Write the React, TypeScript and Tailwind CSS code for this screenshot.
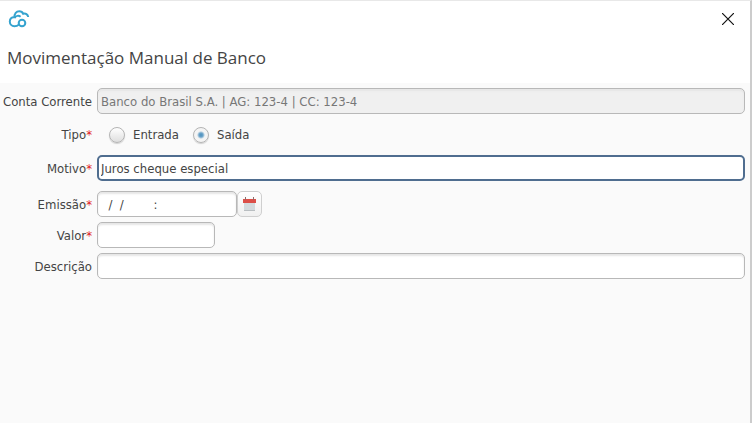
import { useState } from 'react';
import type { ReactNode } from 'react';

const fieldBase =
  'h-[26px] rounded-[5px] border border-[#b8b8b8] px-[3px] shadow-[inset_0_2px_2px_#e6e6e6] outline-none';

function Label({ htmlFor, required, children }: { htmlFor: string; required?: boolean; children: ReactNode }) {
  return (
    <label htmlFor={htmlFor} className="text-right leading-[17px] whitespace-nowrap">
      {children}
      {required && <span className="text-[#e02020]">*</span>}
    </label>
  );
}

function Radio({ id, label, checked, onSelect }: { id: string; label: string; checked: boolean; onSelect: () => void }) {
  return (
    <div className="flex items-center gap-2">
      <input
        id={id}
        type="radio"
        name="tipo"
        checked={checked}
        onChange={onSelect}
        className="size-4 appearance-none rounded-full border border-[#b4b4b4] bg-linear-to-b from-white to-[#dedede] shadow-[0_1px_1px_#d0d0d0] checked:bg-[radial-gradient(circle,#4a8fbd_0,#6ba3c9_2px,#f4f4f4_4px,#f4f4f4_100%)]"
      />
      <label htmlFor={id}>{label}</label>
    </div>
  );
}

export default function App() {
  const [tipo, setTipo] = useState('saida');

  return (
    <div className="flex min-h-screen flex-col border-t border-r-2 border-t-[#e8e8e8] border-r-[#cccccc] bg-[#fafafa] font-['DejaVu_Sans_Condensed','DejaVu_Sans',sans-serif] text-[13px] leading-4 text-[#444444]">
      <header className="bg-white pb-3">
        <div className="flex items-center justify-between pt-2 pr-3 pl-2">
          <svg width="22" height="20" viewBox="0 0 22 20" fill="none" stroke="#35a3cf" strokeWidth="2" role="img" aria-label="Logo">
            <path d="M12.6 7.7C10.5 6.2 8 6.8 7 8.4 4 7.4 1.8 9.6 1.8 12.4c0 2.8 2 4.8 4.6 4.8 2 0 3.4-.6 4.4-1.6" />
            <path d="M6.6 8.2C6.2 4.7 8.4 2.2 11.2 2.2c2.1 0 3.4 1 4 2.6 2.4-.8 4.7.6 5 3.2" />
            <circle cx="14" cy="14" r="3.3" />
          </svg>
          <button type="button" aria-label="Fechar" className="flex size-5 items-center justify-center">
            <svg width="12" height="12" viewBox="0 0 12 12" stroke="#111111" strokeWidth="1.2">
              <path d="M0 0 12 12M12 0 0 12" />
            </svg>
          </button>
        </div>
        <h1 className="pt-4 pl-[7px] font-['Open_Sans',sans-serif] text-[17px] leading-[26px] font-normal text-[#444444]">
          Movimentação Manual de Banco
        </h1>
      </header>

      <form className="grid grid-cols-[92px_minmax(0,1fr)] items-center gap-x-[5px] gap-y-[5px] pt-[5px] pr-[5px]">
        <Label htmlFor="conta">Conta Corrente</Label>
        <input
          id="conta"
          disabled
          defaultValue="Banco do Brasil S.A. | AG: 123-4 | CC: 123-4"
          className={`${fieldBase} w-full bg-[#f0f0f0] text-[#777777]`}
        />

        <Label htmlFor="entrada" required>Tipo</Label>
        <div className="flex h-[31px] items-center gap-3.5 pl-3">
          <Radio id="entrada" label="Entrada" checked={tipo === 'entrada'} onSelect={() => setTipo('entrada')} />
          <Radio id="saida" label="Saída" checked={tipo === 'saida'} onSelect={() => setTipo('saida')} />
        </div>

        <Label htmlFor="motivo" required>Motivo</Label>
        <input
          id="motivo"
          defaultValue="Juros cheque especial"
          className="h-[26px] w-full rounded-[5px] border-2 border-[#4f6d8f] bg-white px-0.5 outline-none"
        />

        <div className="col-span-2 grid grid-cols-subgrid items-center pt-[5px]">
          <Label htmlFor="emissao" required>Emissão</Label>
          <div className="flex">
            <input id="emissao" defaultValue="  /  /        :" className={`${fieldBase} w-[140px] bg-white`} />
            <button
              type="button"
              aria-label="Abrir calendário"
              className="flex h-[26px] w-[25px] items-center justify-center rounded-[5px] border border-[#cfcfcf] bg-linear-to-b from-white to-[#f0f0f0]"
            >
              <svg width="13" height="15" viewBox="0 0 13 15">
                <path d="M1 6h11v8H1z" fill="#d4dadd" />
                <path d="M1 13h11v1H1z" fill="#b9bec1" />
                <path d="M0 2h13v4H0z" fill="#dc4f48" />
                <path d="M2 0h1v3H2zM10 0h1v3h-1z" fill="#8f6b69" />
              </svg>
            </button>
          </div>
        </div>

        <Label htmlFor="valor" required>Valor</Label>
        <input id="valor" className={`${fieldBase} w-[118px] bg-white`} />

        <Label htmlFor="descricao">Descrição</Label>
        <input id="descricao" className={`${fieldBase} w-full bg-white`} />
      </form>
    </div>
  );
}
